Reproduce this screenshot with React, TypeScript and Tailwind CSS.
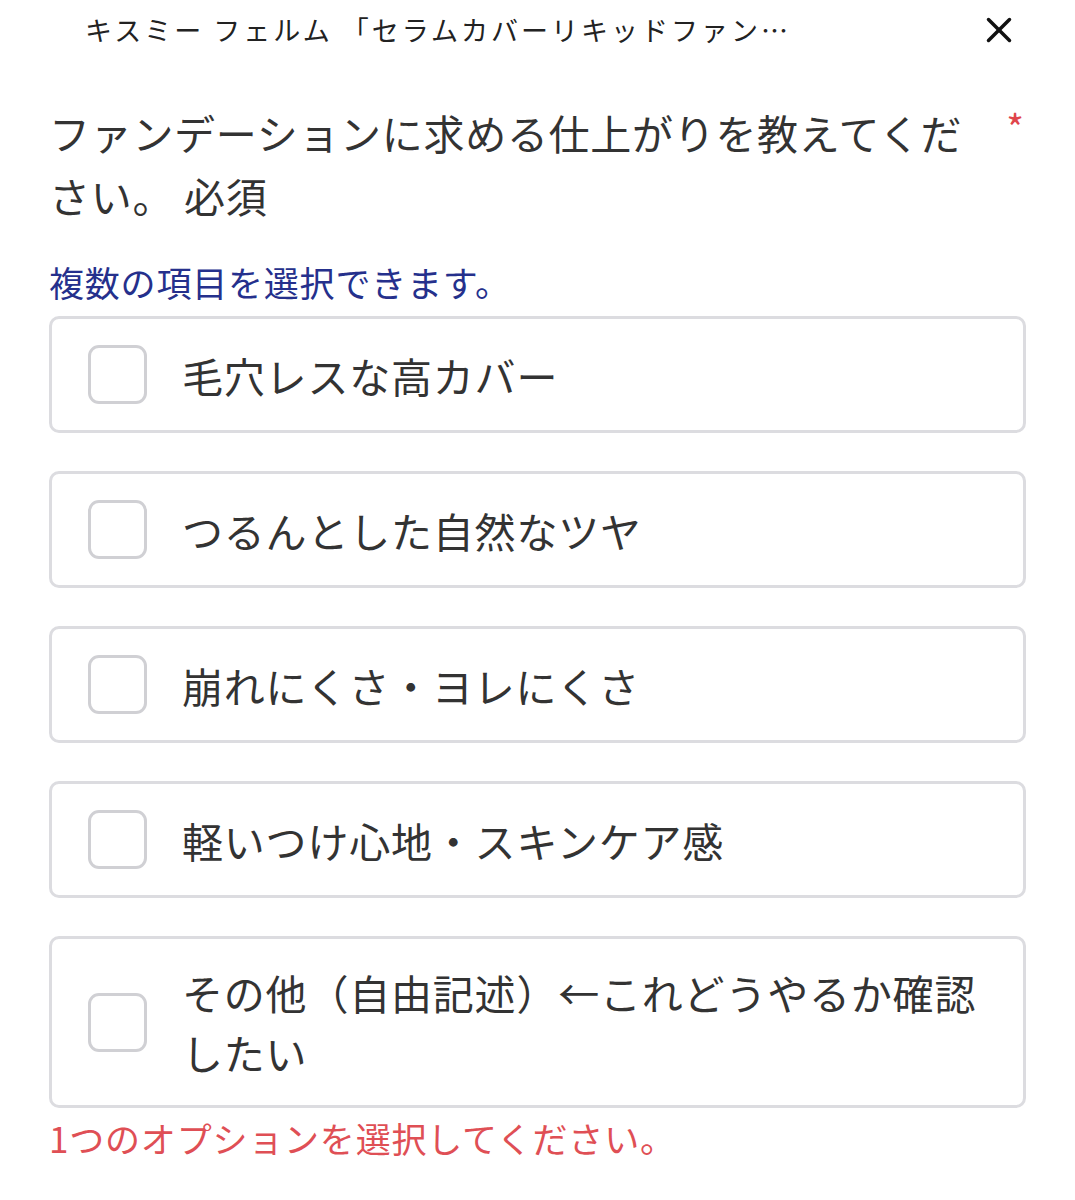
import { X } from 'lucide-react';

const options = [
  '毛穴レスな高カバー',
  'つるんとした自然なツヤ',
  '崩れにくさ・ヨレにくさ',
  '軽いつけ心地・スキンケア感',
  'その他（自由記述）←これどうやるか確認したい',
];

function OptionRow({ label }: { label: string }) {
  return (
    <label className="flex items-center rounded-[10px] border-[3px] border-[#dcdce0] bg-white pl-[36px] pr-[30px] py-[23px] min-h-[117px]">
      <span className="shrink-0 w-[59px] h-[59px] rounded-[11px] border-[3px] border-[#d0d0d4] bg-white" />
      <span className="ml-[35px] text-[41px] leading-[60px] tracking-[0.8px] text-[#333333]">{label}</span>
    </label>
  );
}

export default function App() {
  return (
    <div
      className="w-[1075px] h-[1200px] bg-white overflow-hidden"
      style={{ fontFamily: '"Noto Sans CJK JP", "Noto Sans", sans-serif' }}
    >
      <div className="flex items-center h-[60px] pl-[85px] pr-[55px]">
        <div className="flex-1 min-w-0 text-[27px] tracking-[3px] text-[#222222] whitespace-nowrap">
          キスミー フェルム 「セラムカバーリキッドファン…
        </div>
        <X className="w-[42px] h-[42px] text-[#111111]" strokeWidth={2} />
      </div>

      <div className="px-[49px] pt-[41px]">
        <div className="flex justify-between">
          <h2 className="w-[930px] text-[41px] leading-[63px] tracking-[0.7px] text-[#333333]">
            ファンデーションに求める仕上がりを教えてください。 必須
          </h2>
          <span className="mt-[6px] text-[38px] leading-[40px] text-[#e0454b] mr-[2px]">*</span>
        </div>

        <p className="mt-[33px] text-[35px] leading-[44px] tracking-[0.8px] text-[#25308c]">複数の項目を選択できます。</p>

        <div className="mt-[12px] flex flex-col gap-[38px]">
          {options.map((o) => (
            <OptionRow key={o} label={o} />
          ))}
        </div>

        <p className="mt-[8px] text-[35px] leading-[44px] tracking-[0.8px] text-[#df4f55]">1つのオプションを選択してください。</p>
      </div>
    </div>
  );
}
